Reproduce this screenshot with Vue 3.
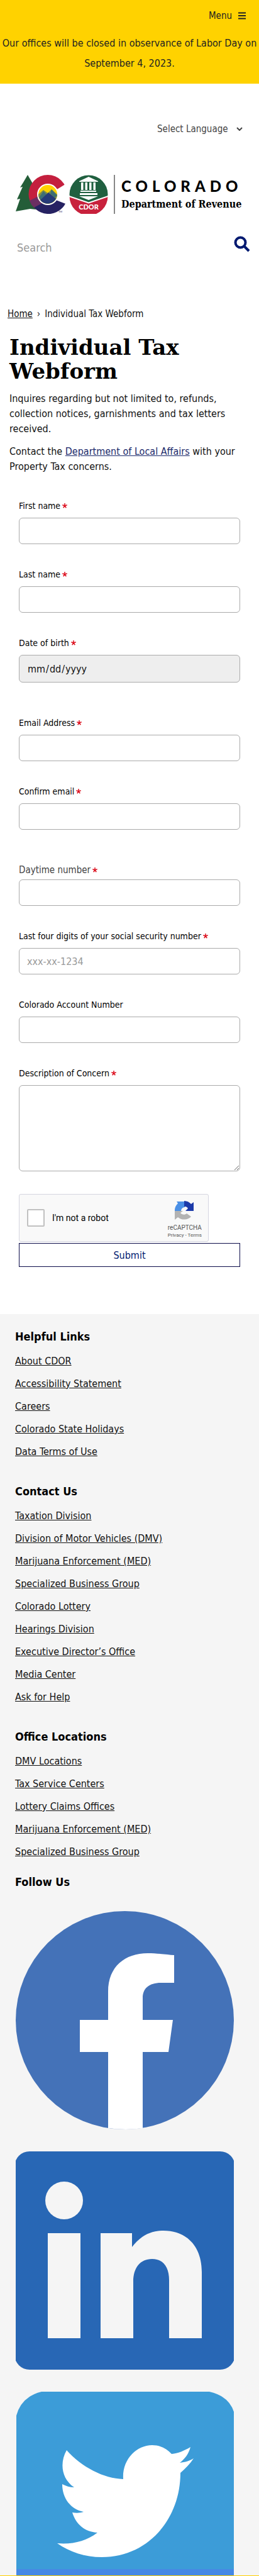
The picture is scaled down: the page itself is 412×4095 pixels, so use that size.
<script setup>
import { reactive } from 'vue'

const fields = [
  { id: 'first-name', label: 'First name', type: 'text', required: true },
  { id: 'last-name', label: 'Last name', type: 'text', required: true },
  { id: 'birth-date', label: 'Date of birth', type: 'date', required: true, spaced: true },
  { id: 'email', label: 'Email Address', type: 'email', required: true },
  { id: 'confirm-email', label: 'Confirm email', type: 'email', required: true, spaced: true },
  { id: 'daytime', label: 'Daytime number', type: 'tel', required: true, large: true },
  { id: 'ssn', label: 'Last four digits of your social security number', type: 'text', required: true, placeholder: 'xxx-xx-1234' },
  { id: 'account', label: 'Colorado Account Number', type: 'text' },
  { id: 'concern', label: 'Description of Concern', type: 'textarea', required: true },
]
const values = reactive({})

const groups = [
  {
    title: 'Helpful Links',
    links: ['About CDOR', 'Accessibility Statement', 'Careers', 'Colorado State Holidays', 'Data Terms of Use'],
  },
  {
    title: 'Contact Us',
    links: ['Taxation Division', 'Division of Motor Vehicles (DMV)', 'Marijuana Enforcement (MED)', 'Specialized Business Group', 'Colorado Lottery', 'Hearings Division', 'Executive Director’s Office', 'Media Center', 'Ask for Help'],
  },
  {
    title: 'Office Locations',
    links: ['DMV Locations', 'Tax Service Centers', 'Lottery Claims Offices', 'Marijuana Enforcement (MED)', 'Specialized Business Group'],
  },
]
</script>

<template>
  <div class="page">
    <div class="alert">
      <button type="button" class="menu">
        Menu
        <svg width="12" height="12" viewBox="0 0 12 12" aria-hidden="true">
          <path d="M0 1.5h12M0 6h12M0 10.5h12" stroke="currentColor" stroke-width="2" />
        </svg>
      </button>
      <p>Our offices will be closed in observance of Labor Day on September 4, 2023.</p>
    </div>

    <header>
      <div class="language">
        <select aria-label="Select Language">
          <option>Select Language</option>
        </select>
        <svg width="10" height="6" viewBox="0 0 10 6" aria-hidden="true">
          <path d="M1 1l4 4 4-4" fill="none" stroke="#444" stroke-width="2" />
        </svg>
      </div>

      <a class="brand" href="#">
        <svg class="emblem" width="147" height="62" viewBox="0 0 147 62" aria-hidden="true">
          <path d="M19 0l7 12 6 43-9-1-23 4 7-20-5 1 9-20-4 1 5-8z" fill="#245d38" />
          <circle cx="51" cy="30.5" r="30.5" fill="#c41f3e" />
          <path d="M27 49L51 30h31l-1 11A30.500 30.500 0 0 1 27 49z" fill="#262262" />
          <path d="M22 41l16-8 4 12-13 7a31 31 0 0 1-7-11z" fill="#6b2f62" />
          <path d="M64 24l18-11 6 18-6 16-18-7z" fill="#fff" />
          <circle cx="51" cy="31" r="17" fill="#fff" />
          <circle cx="51" cy="31" r="15" fill="#ffd200" />
          <path d="M36 31l8-7 7 5 6-6 9 8a15 15 0 0 1-30 0z" fill="#7c8b4a" />
          <path d="M37 36l7-10 5 5-9 9zM57 23l9 10-4 3-7-6z" fill="#3d6f75" />
          <path d="M39 40l13-12 12 10a15 15 0 0 1-25 2z" fill="#263a78" />
          <text x="68" y="60" font-size="4" fill="#262262" font-family="Lato, sans-serif">TM</text>
          <circle cx="116" cy="31" r="30.500" fill="#206040" />
          <path d="M85.500 34L116 44l30.500-10a30.500 30.500 0 0 1-61 0z" fill="#c8213c" />
          <path d="M85 34l31 10.500L147 34" fill="none" stroke="#fff" stroke-width="2" />
          <path d="M116 3l15 7v1h-30v-1zM104 12h3.500v12H104zM110.500 12h3.500v12h-3.500zM117 12h3.500v12H117zM123.500 12h3.500v12h-3.500zM103 25h25v2h-25zM102 29h28v3h-28zM101 34h30l-15 6z" fill="#fff" />
          <text x="116" y="55" text-anchor="middle" font-size="11" font-weight="900" fill="#fff" font-family="Lato, sans-serif">CDOR</text>
        </svg>
        <span class="wordmark">
          <span class="state">COLORADO</span>
          <span class="dept">Department of Revenue</span>
        </span>
      </a>

      <form class="search" role="search" @submit.prevent>
        <input type="search" placeholder="Search" aria-label="Search" />
        <button type="submit" aria-label="Search">
          <svg width="26" height="26" viewBox="0 0 26 26" aria-hidden="true">
            <circle cx="10.500" cy="10.500" r="8" fill="none" stroke="#001970" stroke-width="4" />
            <path d="M16 16l8 8" stroke="#001970" stroke-width="4" />
          </svg>
        </button>
      </form>
    </header>

    <main>
      <nav class="crumbs" aria-label="Breadcrumb">
        <a href="#">Home</a><span>›</span><span>Individual Tax Webform</span>
      </nav>
      <h1>Individual Tax Webform</h1>
      <p>Inquires regarding but not limited to, refunds, collection notices, garnishments and tax letters received.</p>
      <p>Contact the <a href="#">Department of Local Affairs</a> with your Property Tax concerns.</p>

      <form class="webform" @submit.prevent>
        <div v-for="f in fields" :key="f.id" class="field" :class="{ spaced: f.spaced, large: f.large }">
          <label :for="f.id">
            {{ f.label }}
            <svg v-if="f.required" width="8" height="8" viewBox="0 0 8 8" aria-hidden="true">
              <path d="M4 4V0M4 4L.3 2.800M4 4l3.700-1.200M4 4L1.700 7.300M4 4l2.300 3.300" stroke="#dc0f1e" stroke-width="1.500" />
            </svg>
          </label>
          <textarea v-if="f.type === 'textarea'" :id="f.id" v-model="values[f.id]"></textarea>
          <input v-else :id="f.id" v-model="values[f.id]" :type="f.type" :placeholder="f.placeholder" />
        </div>

        <div class="captcha">
          <input id="robot" type="checkbox" />
          <label for="robot">I'm not a robot</label>
          <div class="captcha-brand">
            <svg width="31" height="31" viewBox="0 0 31 31" aria-hidden="true">
              <path d="M0 16A15.500 15.500 0 0 1 5 4L3 1h13v9a6 6 0 0 0-6 6z" fill="#4a90e6" />
              <path d="M15 0a15.500 15.500 0 0 1 11 5l4-3v14H17l4-4a6 6 0 0 0-6-3z" fill="#1c3aa9" />
              <path d="M0 16h13l-4 3c2 3 7 4 10 1l7 5A15.500 15.500 0 0 1 5 26l-5 4z" fill="#b3b3b3" />
            </svg>
            <span class="captcha-name">reCAPTCHA</span>
            <span class="captcha-links"><a href="#">Privacy</a> - <a href="#">Terms</a></span>
          </div>
        </div>
        <button type="submit" class="submit">Submit</button>
      </form>
    </main>

    <footer>
      <section v-for="g in groups" :key="g.title">
        <h2>{{ g.title }}</h2>
        <ul>
          <li v-for="l in g.links" :key="l"><a href="#">{{ l }}</a></li>
        </ul>
      </section>
      <section class="follow">
        <h2>Follow Us</h2>
        <div class="social">
          <a href="#" aria-label="Facebook">
            <svg viewBox="0 0 347 347">
              <circle cx="173.500" cy="173.500" r="173.500" fill="#4472b8" />
              <path d="M102 173h45v-45c0-40 27-61 63-61 14 0 30 2 42 3v44h-21c-19 0-29 9-29 24v35h48l-7 51h-41v121q-27 4-55 0V224h-45z" fill="#fff" />
            </svg>
          </a>
          <a href="#" aria-label="LinkedIn">
            <svg viewBox="0 0 347 347">
              <rect x="-2" width="351" height="347" rx="24" fill="#2867b5" />
              <g fill="#f5f5f5">
                <circle cx="77" cy="78" r="30" />
                <path d="M51 130h52v167H51zM135 130h50v22c12-16 28-26 50-26 36 0 61 24 61 66v105h-52v-92c0-21-9-34-27-34-19 0-30 14-30 36v90h-52z" />
              </g>
            </svg>
          </a>
          <a href="#" aria-label="Twitter">
            <svg viewBox="0 0 347 292">
              <path d="M1 292V38Q9 8 41 0h267q31 7 39 32v260z" fill="#3c9cd8" />
              <path d="M1 282h346v10H1z" fill="#4689e4" />
              <path d="M81 93C105 120 140 138 171 139C169 108 192 85 217 85C229 85 240 90 248 99C258 98 268 94 278 88C275 99 269 107 261 113C270 112 276 110 283 106C277 115 270 122 262 129C262 203 210 263 137 263C110 263 86 255 66 241C90 243 112 238 130 224C110 223 96 211 90 192C96 193 102 193 108 191C88 187 74 170 74 147C80 150 86 152 93 152C72 138 70 112 81 93z" fill="#fff" />
            </svg>
          </a>
        </div>
      </section>
    </footer>
  </div>
</template>

<style>
body {
  margin: 0;
}
</style>

<style scoped>
.page,
.page * {
  box-sizing: border-box;
}
.page {
  font-family: "Trebuchet MS", "DejaVu Sans Condensed", "Open Sans", sans-serif;
  font-size: 16px;
  line-height: 24px;
  color: #111;
  background: #fff;
}
.page input,
.page select,
.page button,
.page textarea {
  font-family: inherit;
  font-size: 16px;
  border-radius: 0;
  margin: 0;
}
p,
h1,
h2,
ul {
  margin: 0;
  padding: 0;
}

.alert {
  display: flex;
  flex-direction: column;
  gap: 12px;
  padding: 9px 0 16px;
  background: #ffd200;
  text-align: center;
  line-height: 32px;
  color: #222;
}
.page .menu {
  display: flex;
  align-items: center;
  gap: 10px;
  align-self: flex-end;
  height: 32px;
  margin-right: 21px;
  padding: 0;
  border: 0;
  background: none;
  font-size: 15px;
  color: #222;
}

header {
  display: flex;
  flex-direction: column;
  padding: 56px 14px 0 25px;
}
.language {
  display: grid;
  align-items: center;
  justify-items: end;
  align-self: flex-end;
  margin-right: 12px;
}
.language > * {
  grid-area: 1 / 1;
}
.language svg {
  pointer-events: none;
}
.page select {
  appearance: none;
  height: 32px;
  padding: 0 23px 0 0;
  border: 0;
  background: none;
  font-size: 15px;
  color: #444;
}
.brand {
  display: flex;
  align-items: stretch;
  margin-top: 57px;
  color: #000;
  text-decoration: none;
}
.emblem {
  flex: none;
}
.wordmark {
  display: flex;
  flex-direction: column;
  justify-content: center;
  gap: 3px;
  margin-left: 9px;
  padding-left: 10px;
  border-left: 2px solid #888;
  white-space: nowrap;
}
.state {
  font: 900 24px/28px Lato, sans-serif;
  letter-spacing: 7px;
}
.dept {
  font: bold 16px/24px "DejaVu Serif Condensed", "DejaVu Serif", serif;
}
.search {
  display: flex;
  align-items: flex-start;
  margin-top: 33px;
}
.page .search input {
  flex: 1;
  min-width: 0;
  height: 40px;
  padding: 0 2px;
  border: 0;
  outline: 0;
  background: none;
  font-size: 18px;
}
.page .search button {
  display: flex;
  padding: 2px 0;
  border: 0;
  background: none;
}
input::placeholder {
  color: #999;
  opacity: 1;
}

main {
  padding: 74px 30px 75px 15px;
}
.crumbs {
  display: flex;
  gap: 7px;
  margin: 0 0 22px -3px;
  font-size: 15px;
}
.crumbs a {
  color: #111;
}
h1 {
  margin-bottom: 13px;
  font: bold 34px/38px "DejaVu Serif", serif;
  color: #000;
}
main > p {
  margin-right: -10px;
  margin-bottom: 12px;
}
main > p a {
  color: #1b2a6b;
}

.webform {
  margin: 38px 0 0 15px;
}
.field {
  display: flex;
  flex-direction: column;
  gap: 7px;
  margin-bottom: 36px;
}
.field label {
  display: flex;
  align-items: center;
  gap: 3px;
  font-size: 14px;
  color: #000;
}
.field.spaced {
  margin-bottom: 52px;
}
.field.large {
  gap: 3px;
}
.field.large label {
  font-size: 15px;
  color: #444;
}
.page .field input,
.page .field textarea {
  width: 100%;
  height: 42px;
  padding: 0 12px;
  border: 1px solid #aaa;
  border-radius: 6px;
  background: #fff;
  color: #111;
}
.page .field input[type="date"] {
  height: 44px;
  background: #eee;
}
input[type="date"]::-webkit-calendar-picker-indicator {
  display: none;
}
.page .field textarea {
  display: block;
  height: 137px;
}

.captcha {
  display: flex;
  align-items: center;
  width: 302px;
  max-width: 100%;
  height: 76px;
  padding: 0 10px 0 12px;
  border: 1px solid #d6d6e0;
  border-radius: 3px;
  background: #f9f9f9;
  font-family: Roboto, sans-serif;
}
.page .captcha input {
  appearance: none;
  width: 28px;
  height: 28px;
  border: 2px solid #c1c1c1;
  border-radius: 2px;
  background: #fff;
}
.captcha label {
  margin-left: 12px;
  font-size: 14px;
  color: #000;
}
.captcha-brand {
  display: flex;
  flex-direction: column;
  align-items: center;
  margin-left: auto;
  padding-top: 6px;
  color: #555;
}
.captcha-name {
  margin-top: 5px;
  font-size: 10px;
  line-height: 13px;
}
.captcha-links {
  font-size: 8px;
  line-height: 11px;
}
.captcha-links a {
  color: inherit;
  text-decoration: none;
}
.page .submit {
  width: 100%;
  height: 38px;
  margin-top: 2px;
  padding: 0;
  border: 1px solid #0d0d4a;
  background: #fff;
  color: #001970;
}

footer {
  padding: 21px 40px 0 24px;
  border-bottom: 1px solid #ffd200;
  background: #f5f5f5;
}
footer section + section {
  margin-top: 30px;
}
footer section.follow {
  margin-top: 15px;
}
h2 {
  font-size: 18px;
  line-height: 30px;
  color: #000;
}
ul {
  margin-top: 6px;
  list-style: none;
}
li {
  line-height: 36px;
}
li a {
  color: #111;
}
.social {
  display: flex;
  flex-direction: column;
  gap: 35px;
  margin: 31px 0 0 1px;
}
.social a,
.social svg {
  display: block;
  width: 100%;
}
</style>
